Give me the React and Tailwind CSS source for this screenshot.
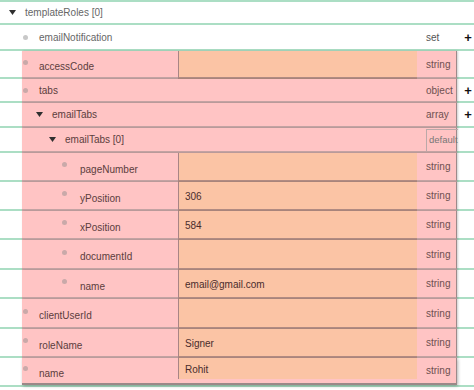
import React from "react";

const GREEN = "border-[#abdec4]";

// marker / label offsets inside the pink block, per nesting level
const LEVEL = {
  0: { pad: "pl-px", gap: "ml-[11px]" },
  1: { pad: "pl-[14px]", gap: "ml-[9px]" },
  2: { pad: "pl-[27px]", gap: "ml-[9px]" },
  3: { pad: "pl-[40px]", gap: "ml-[13px]" },
};

const rows = [
  { label: "accessCode", level: 0, marker: "dot", input: "", type: "string", h: "h-[28px]" },
  { label: "tabs", level: 0, marker: "dot", type: "object", plus: true, h: "h-[24px]" },
  { label: "emailTabs", level: 1, marker: "caret", type: "array", plus: true, h: "h-[25px]" },
  { label: "emailTabs [0]", level: 2, marker: "caret", type: "default", h: "h-[25px]" },
  { label: "pageNumber", level: 3, marker: "dot", input: "", type: "string", h: "h-[29px]" },
  { label: "yPosition", level: 3, marker: "dot", input: "306", type: "string", h: "h-[29px]" },
  { label: "xPosition", level: 3, marker: "dot", input: "584", type: "string", h: "h-[29px]" },
  { label: "documentId", level: 3, marker: "dot", input: "", type: "string", h: "h-[30px]" },
  { label: "name", level: 3, marker: "dot", input: "email@gmail.com", type: "string", h: "h-[29px]" },
  { label: "clientUserId", level: 0, marker: "dot", input: "", type: "string", h: "h-[30px]" },
  { label: "roleName", level: 0, marker: "dot", input: "Signer", type: "string", h: "h-[29px]" },
  { label: "name", level: 0, marker: "dot", input: "Rohit", type: "string", h: "h-[27px]", last: true },
];

function Caret() {
  return (
    <svg width="7" height="5" viewBox="0 0 7 5" className="shrink-0">
      <path d="M0 0H7L3.5 5Z" fill="#2f2f2f" />
    </svg>
  );
}

function Dot({ pink, offset }) {
  return (
    <span
      className={`block w-[5px] h-[5px] rounded-full shrink-0 ${
        pink ? "bg-[#c9a9a9]" : "bg-[#c8c8c8]"
      } ${offset ? "mb-[4px]" : ""}`}
    />
  );
}

function Plus() {
  return <span className="text-[13px] font-bold leading-none text-[#111]">+</span>;
}

function PinkRow({ row }) {
  const lv = LEVEL[row.level];
  const hasInput = row.input !== undefined;
  return (
    <div className={`flex ${row.h}`}>
      <div className={`w-[22px] shrink-0 ${row.last ? "" : `border-b-2 ${GREEN}`}`} />
      <div
        className={`relative z-10 flex w-[435px] shrink-0 bg-[#ffc4c4] border-r border-r-[#9c8a8a] ${
          row.last
            ? "border-b-2 border-b-[#9a8888] shadow-[1px_1px_3px_rgba(0,0,0,0.3)]"
            : "border-b-2 border-b-[#c6a5a5] shadow-[1px_0_2px_rgba(0,0,0,0.2)]"
        }`}
      >
        <div className={`w-[156px] shrink-0 flex items-center ${lv.pad}`}>
          {row.marker === "caret" ? <Caret /> : <Dot pink offset={hasInput} />}
          <span className={`${lv.gap} text-[#5c3d3d] ${hasInput ? "mt-[5px]" : ""}`}>{row.label}</span>
        </div>
        {hasInput ? (
          <div
            className={`w-[239px] shrink-0 flex items-center pl-[6px] pt-[2px] bg-[#fbc4a5] border-l border-l-[#a88585] text-[#4a2c2c] ${
              row.last ? "mb-[4px]" : "border-b-2 border-b-[#b48d84] -mb-[2px]"
            }`}
          >
            {row.input}
          </div>
        ) : (
          <div className="w-[239px] shrink-0" />
        )}
        <div className="flex-1 flex items-center">
          {row.type === "default" ? (
            <div className="ml-[9px] self-stretch mt-px flex items-center pl-[2px] border-t border-l border-[#bba9a9] text-[#777] text-[9.5px] whitespace-nowrap">
              default
            </div>
          ) : (
            <span className="pl-[9px] text-[#6e5050]">{row.type}</span>
          )}
        </div>
      </div>
      <div className={`flex-1 flex items-center justify-center pl-[5px] ${row.last ? "" : `border-b-2 ${GREEN}`}`}>
        {row.plus && <Plus />}
      </div>
    </div>
  );
}

export default function App() {
  return (
    <div className="w-[474px] h-[390px] overflow-hidden bg-white font-['Liberation_Sans',Arial,sans-serif] text-[10px] text-[#666]">
      <div className={`border-t-2 ${GREEN}`} />

      {/* templateRoles [0] */}
      <div className={`flex items-center h-[23px] pl-[9px] border-b-2 ${GREEN}`}>
        <Caret />
        <span className="ml-[9px]">templateRoles [0]</span>
      </div>

      {/* emailNotification */}
      <div className={`flex items-center h-[26px] border-b-2 ${GREEN}`}>
        <div className="w-[417px] shrink-0 flex items-center pl-[23px]">
          <Dot />
          <span className="ml-[11px]">emailNotification</span>
        </div>
        <span className="w-[40px] shrink-0 pl-[9px] text-[#555]">set</span>
        <div className="flex-1 flex justify-center pl-[5px]">
          <Plus />
        </div>
      </div>

      {rows.map((row, i) => (
        <PinkRow key={i} row={row} />
      ))}

      <div className={`border-t-2 ${GREEN}`} />
    </div>
  );
}
